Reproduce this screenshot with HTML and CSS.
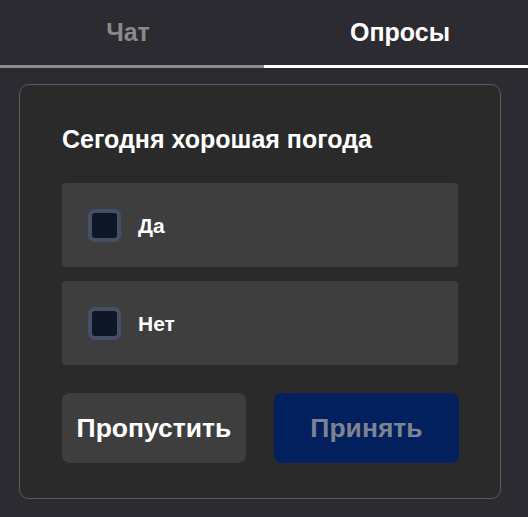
FILE: index.html
```html
<!DOCTYPE html>
<html lang="ru">
<head>
<meta charset="utf-8">
<link rel="stylesheet" href="styles.css">
</head>
<body>
<nav class="tabs">
  <div class="tab">Чат</div>
  <div class="tab active">Опросы</div>
</nav>
<section class="card">
  <h2 class="question">Сегодня хорошая погода</h2>
  <div class="options">
    <label class="option"><span class="check"></span><span class="opt-text">Да</span></label>
    <label class="option"><span class="check"></span><span class="opt-text">Нет</span></label>
  </div>
  <div class="actions">
    <button class="btn skip">Пропустить</button>
    <button class="btn accept">Принять</button>
  </div>
</section>
</body>
</html>
```
FILE: styles.css
```css
* { box-sizing: border-box; }
html, body { margin: 0; padding: 0; }
body {
  background: #2c2b31;
  font-family: "Liberation Sans", Arial, sans-serif;
  width: 528px;
  height: 517px;
  overflow: hidden;
}
.tabs {
  display: grid;
  grid-template-columns: 264px 264px;
  height: 68px;
}
.tab {
  display: flex;
  align-items: center;
  justify-content: center;
  height: 68px;
  padding-bottom: 1px;
  border-bottom: 3px solid #8c8c8c;
  color: #8a8a8a;
  font-weight: bold;
  font-size: 25px;
}
.tab:first-child { padding-right: 8px; }
.tab.active {
  color: #ffffff;
  border-bottom-color: #ffffff;
  padding-left: 8px;
}
.card {
  margin: 16px 27px 0 19px;
  height: 415px;
  border: 1px solid #5a5a5e;
  border-radius: 10px;
  background: #2a2a2a;
  padding: 40px 42px 0 42px;
}
.question {
  margin: 0;
  color: #ffffff;
  font-size: 25px;
  font-weight: bold;
  line-height: 28px;
  height: 58px;
}
.options {
  display: flex;
  flex-direction: column;
  gap: 14px;
}
.option {
  display: flex;
  align-items: center;
  height: 84px;
  background: #3e3e3e;
  border-radius: 4px;
  padding-left: 26px;
  gap: 17px;
}
.check {
  width: 33px;
  height: 33px;
  border-radius: 7px;
  background: #0f1726;
  border: 4px solid #454f68;
}
.opt-text {
  color: #ffffff;
  font-weight: bold;
  font-size: 21px;
  padding-top: 2px;
}
.actions {
  display: grid;
  grid-template-columns: 184px 185px;
  gap: 28px;
  margin-top: 28px;
}
.btn {
  height: 70px;
  border: none;
  border-radius: 8px;
  font-family: "Liberation Sans", Arial, sans-serif;
  font-weight: bold;
  font-size: 26.5px;
}
.skip { background: #3e3e3e; color: #ffffff; }
.accept { background: #03205e; color: #7d8491; }
```
